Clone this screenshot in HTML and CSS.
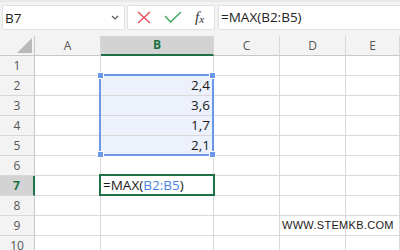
FILE: index.html
```html
<!DOCTYPE html>
<html>
<head>
<meta charset="utf-8">
<link rel="stylesheet" href="styles.css">
</head>
<body>
<div class="app">
  <div class="toolbar">
    <div class="namebox">
      <span class="name">B7</span>
      <svg class="chev" width="8" height="5" viewBox="0 0 8 5"><polyline points="1,1 4,4 7,1" fill="none" stroke="#555" stroke-width="1.1"/></svg>
    </div>
    <div class="fxbox">
      <svg class="ico" width="14" height="13" viewBox="0 0 14 13"><path d="M1 1 L13 12 M13 1 L1 12" stroke="#e0464b" stroke-width="1.2" fill="none"/></svg>
      <svg class="ico" width="18" height="13" viewBox="0 0 18 13"><polyline points="1,5 6.5,11 17,1" stroke="#37a557" stroke-width="1.3" fill="none"/></svg>
      <span class="fx">f<sub>x</sub></span>
    </div>
    <div class="formula">=MAX(B2:B5)</div>
  </div>
  <div class="sheet">
    <div class="grid">
      <div class="corner"><span class="tri"></span></div>
      <div class="ch">A</div>
      <div class="ch sel">B</div>
      <div class="ch">C</div>
      <div class="ch">D</div>
      <div class="ch">E</div>

      <div class="rh">1</div><div class="c"></div><div class="c"></div><div class="c"></div><div class="c"></div><div class="c"></div>
      <div class="rh">2</div><div class="c"></div><div class="c num hl">2,4</div><div class="c"></div><div class="c"></div><div class="c"></div>
      <div class="rh">3</div><div class="c"></div><div class="c num hl">3,6</div><div class="c"></div><div class="c"></div><div class="c"></div>
      <div class="rh">4</div><div class="c"></div><div class="c num hl">1,7</div><div class="c"></div><div class="c"></div><div class="c"></div>
      <div class="rh">5</div><div class="c"></div><div class="c num hl">2,1</div><div class="c"></div><div class="c"></div><div class="c"></div>
      <div class="rh">6</div><div class="c"></div><div class="c"></div><div class="c"></div><div class="c"></div><div class="c"></div>
      <div class="rh sel">7</div><div class="c"></div><div class="c edit">=MAX(<span class="ref">B2:B5</span>)</div><div class="c"></div><div class="c"></div><div class="c"></div>
      <div class="rh">8</div><div class="c"></div><div class="c"></div><div class="c"></div><div class="c"></div><div class="c"></div>
      <div class="rh">9</div><div class="c"></div><div class="c"></div><div class="c"></div><div class="c"></div><div class="c"></div>
      <div class="rh">10</div><div class="c"></div><div class="c"></div><div class="c"></div><div class="c"></div><div class="c"></div>
    </div>
    <div class="range">
      <span class="h tl"></span><span class="h tr"></span><span class="h bl"></span><span class="h br"></span>
    </div>
    <div class="active"></div>
    <div class="mark">WWW.STEMKB.COM</div>
  </div>
</div>
</body>
</html>
```
FILE: styles.css
```css
html, body {
  margin: 0;
  padding: 0;
  background: #ffffff;
}
.app {
  width: 400px;
  height: 250px;
  overflow: hidden;
  font-family: "Open Sans", "Noto Sans", sans-serif;
  color: #222;
}
.toolbar {
  height: 36px;
  box-sizing: border-box;
  background: #f3f3f3;
  border-top: 2px solid #e9e9e9;
  padding-top: 3px;
  display: flex;
  align-items: flex-start;
}
.namebox {
  margin-left: 2px;
  width: 123px;
  height: 25px;
  box-sizing: border-box;
  background: #fff;
  border: 1px solid #e1e1e1;
  border-radius: 2px;
  display: flex;
  align-items: center;
  justify-content: space-between;
  padding: 0 5px 0 2px;
}
.name {
  font-size: 13.5px;
  color: #222;
}
.chev {
  display: block;
}
.fxbox {
  margin-left: 2px;
  width: 88px;
  height: 25px;
  box-sizing: border-box;
  background: #fff;
  border: 1px solid #e1e1e1;
  border-radius: 2px;
  display: flex;
  align-items: center;
  padding-left: 9px;
}
.ico {
  display: block;
}
.ico + .ico {
  margin-left: 13px;
}
.fx {
  margin-left: 13px;
  font-family: "Liberation Serif", "DejaVu Serif", serif;
  font-style: italic;
  font-size: 15px;
  color: #333;
  line-height: 1;
}
.fx sub {
  font-size: 11px;
  vertical-align: -1px;
}
.formula {
  margin-left: 3px;
  flex: 1;
  height: 25px;
  box-sizing: border-box;
  background: #fff;
  border: 1px solid #e1e1e1;
  border-right: none;
  border-radius: 2px 0 0 2px;
  font-size: 13.5px;
  line-height: 23px;
  padding-left: 2px;
  color: #222;
}
.sheet {
  position: relative;
}
.grid {
  display: grid;
  grid-template-columns: 35px 66px 113px 66px 66px 1fr;
  grid-auto-rows: 20px;
}
.grid > div {
  box-sizing: border-box;
}
.corner {
  background: #f3f3f3;
  border-right: 1px solid #c8c8c8;
  border-bottom: 1px solid #c8c8c8;
  position: relative;
}
.tri {
  position: absolute;
  right: 2px;
  bottom: 2px;
  width: 0;
  height: 0;
  border-left: 15px solid transparent;
  border-bottom: 15px solid #b9b9b9;
}
.ch {
  background: #f3f3f3;
  border-right: 1px solid #d8d8d8;
  border-bottom: 1px solid #c8c8c8;
  font-size: 12px;
  line-height: 19px;
  text-align: center;
  color: #555;
}
.ch.sel {
  background: #d3d3d3;
  border-bottom: 2px solid #1e7145;
  color: #1e7145;
  font-weight: 700;
  line-height: 18px;
}
.rh {
  background: #f3f3f3;
  border-right: 1px solid #c8c8c8;
  border-bottom: 1px solid #d8d8d8;
  font-size: 12px;
  line-height: 19px;
  text-align: center;
  color: #555;
}
.rh.sel {
  background: #d3d3d3;
  border-right: 2px solid #1e7145;
  color: #1e7145;
  font-weight: 700;
}
.c {
  border-right: 1px solid #d9d9d9;
  border-bottom: 1px solid #d9d9d9;
  font-size: 13.5px;
  line-height: 19px;
  white-space: nowrap;
  color: #1a1a1a;
}
.c.num {
  text-align: right;
  padding-right: 3px;
}
.c.hl {
  background: #edf1fb;
}
.c.edit {
  padding-left: 2px;
  overflow: visible;
}
.ref {
  color: #4a82e4;
}
.range {
  position: absolute;
  left: 99px;
  top: 38px;
  width: 115px;
  height: 82px;
  box-sizing: border-box;
  border: 2px solid #6b98e6;
}
.h {
  position: absolute;
  width: 5px;
  height: 5px;
  background: #6b98e6;
  border: 1px solid #fff;
}
.h.tl { left: -4px; top: -4px; }
.h.tr { right: -4px; top: -4px; }
.h.bl { left: -4px; bottom: -4px; }
.h.br { right: -4px; bottom: -4px; }
.active {
  position: absolute;
  left: 99px;
  top: 138px;
  width: 116px;
  height: 22px;
  box-sizing: border-box;
  border: 2px solid #1e7145;
}
.mark {
  position: absolute;
  left: 282px;
  top: 183px;
  font-family: "Liberation Sans", Arial, sans-serif;
  font-size: 11px;
  letter-spacing: 0.3px;
  color: #1a1a1a;
}
```
